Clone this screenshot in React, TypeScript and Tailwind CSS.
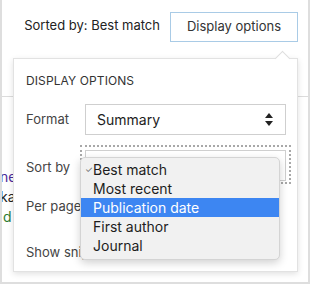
import React from 'react';

const font = { fontFamily: 'Inter, "Liberation Sans", Arial, sans-serif' };

const SortMenu = () => {
  const items = ['Best match', 'Most recent', 'Publication date', 'First author', 'Journal'];
  return (
    <div className="absolute left-[66px] top-[98px] z-10 w-[200px] rounded-[5px] border border-[#d4d4d4] bg-[#f1f1f1] pb-[4px] pt-[2px] shadow-[0_3px_8px_rgba(0,0,0,0.18)]">
      {items.map((item, i) => (
        <div
          key={item}
          className={`flex h-[19px] items-center text-[14px] leading-none ${
            i === 2 ? 'bg-[#3d86f2] text-white' : 'text-[#1d1d1d]'
          }`}
        >
          <span className="w-[12px] pl-[4px] text-[9px] text-[#666]">{i === 0 ? '✓' : ''}</span>
          <span>{item}</span>
        </div>
      ))}
    </div>
  );
};

const DisplayPanel = () => {
  return (
    <div className="absolute left-[11px] top-[58px] h-[214px] w-[285px] border border-[#e2e2e2] bg-white shadow-[0_2px_6px_rgba(0,0,0,0.12)]">
      {/* caret */}
      <div className="absolute right-[9px] top-[-6px] h-[11px] w-[11px] rotate-45 border-l border-t border-[#dedede] bg-white" />

      <div className="relative pl-[12px] pt-[16px] text-[#333]">
        <div className="text-[12px] leading-[12px] tracking-[0.1px]">DISPLAY OPTIONS</div>

        <div className="mt-[17px] flex h-[31px] items-center">
          <span className="w-[59px] text-[13px] text-[#444]">Format</span>
          <div className="flex h-[31px] w-[201px] items-center justify-between border border-[#cfcfcf] bg-white pl-[11px] pr-[12px]">
            <span className="text-[14px] text-[#1d1d1d]">Summary</span>
            <svg width="8" height="13" viewBox="0 0 8 13">
              <path d="M4 0 L8 5 H0 Z" fill="#222" />
              <path d="M4 13 L8 8 H0 Z" fill="#222" />
            </svg>
          </div>
        </div>

        <div className="relative mt-[15px] flex h-[31px] items-center">
          <span className="w-[59px] pt-[4px] text-[13px] text-[#444]">Sort by</span>
          <div className="h-[31px] w-[201px] border border-[#cfcfcf] bg-white" />
          <div className="absolute left-[54px] top-[-5px] h-[39px] w-[211px] border-2 border-dotted border-[#a8a8a8]" />
        </div>

        <div className="mt-[10px] flex h-[31px] items-center">
          <span className="whitespace-nowrap text-[13px] text-[#444]">Per page</span>
        </div>

        <div className="mt-[15px] flex h-[31px] items-center">
          <span className="whitespace-nowrap text-[13px] text-[#444]">Show snippets</span>
        </div>

        <div className="absolute left-[119px] top-[199px] h-[2px] w-[18px] bg-[#3a6fc4]" />
      </div>

      <SortMenu />
    </div>
  );
};

export default function App() {
  return (
    <div
      className="relative h-[284px] w-[310px] overflow-hidden border-b-2 border-l-2 border-r-2 border-[#dedede] bg-white"
      style={font}
    >
      <div className="flex h-[42px] items-end justify-end gap-[10px] pr-[10px]">
        <span className="mb-[7px] text-[13px] text-[#222]">Sorted by: Best match</span>
        <button className="h-[30px] w-[128px] border border-[#a9cbe6] bg-white text-[13px] text-[#333]">
          Display options
        </button>
      </div>

      <div className="h-[55px] border-b border-[#dcdcdc]" />

      <div className="ml-[-2px] mt-[70px] text-[14px] leading-[20px]">
        <div className="text-[#4b2a99]">ne</div>
        <div className="text-[#222]">ka</div>
        <div className="pl-[3px] text-[#2f7d32]">d</div>
      </div>

      <DisplayPanel />
    </div>
  );
}
